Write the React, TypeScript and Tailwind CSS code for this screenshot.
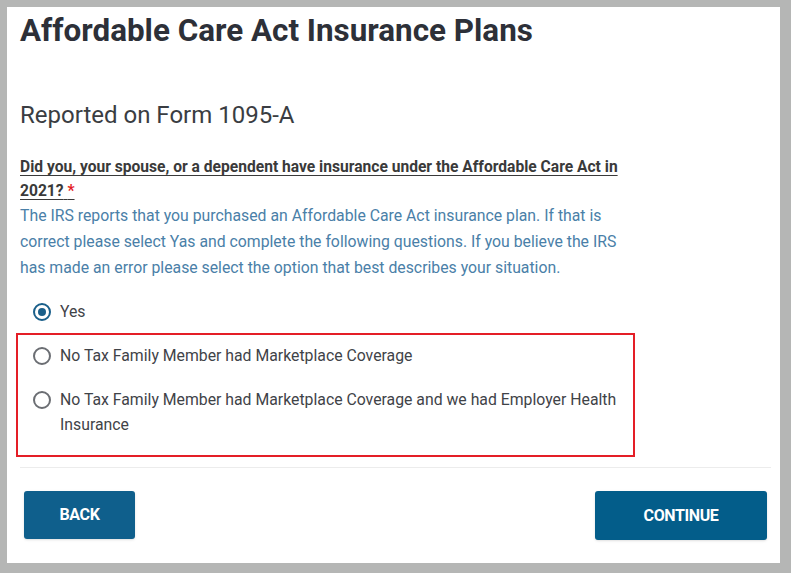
import React from 'react';

const options = [
  { id: 'yes', label: 'Yes' },
  { id: 'none', label: 'No Tax Family Member had Marketplace Coverage' },
  {
    id: 'employer',
    label: 'No Tax Family Member had Marketplace Coverage and we had Employer Health Insurance',
  },
];

const Radio = ({ checked }: { checked: boolean }) => (
  <span
    className={
      checked
        ? 'mt-[4px] flex h-[18px] w-[18px] shrink-0 items-center justify-center rounded-full border-2 border-[#1a5f8a]'
        : 'mt-[4px] flex h-[18px] w-[18px] shrink-0 items-center justify-center rounded-full border-2 border-[#6b6e73]'
    }
  >
    {checked && <span className="h-[8px] w-[8px] rounded-full bg-[#1a5f8a]" />}
  </span>
);

export default function App() {
  const selected = 'yes';

  return (
    <div className="h-[573px] w-[791px] bg-[#b5b6b5] pl-[7px] pt-[7px] font-['Roboto',sans-serif]">
      <div className="flex h-[556px] w-[773px] flex-col bg-white pl-[13px] pr-[9px]">
        <h1 className="mt-[4px] text-[31.4px] font-bold leading-[40px] text-[#2d3038]">
          Affordable Care Act Insurance Plans
        </h1>

        <h2 className="mt-[49px] text-[24px] leading-[30px] text-[#3a3d42]">Reported on Form 1095-A</h2>

        <p className="mt-[25px] w-[610px] text-[15.6px] font-bold leading-[24px] text-[#3a3a3a] underline underline-offset-[3px]">
          Did you, your spouse, or a dependent have insurance under the Affordable Care Act in 2021?{' '}
          <span className="text-[#e41e26]">*</span>
        </p>
        <p className="w-[605px] text-[15.8px] leading-[26px] text-[#4a80a8]">
          The IRS reports that you purchased an Affordable Care Act insurance plan. If that is correct please
          select Yas and complete the following questions. If you believe the IRS has made an error please select
          the option that best describes your situation.
        </p>

        <div className="mt-[18px] flex items-start gap-[9px] pl-[13px]">
          <Radio checked={selected === 'yes'} />
          <span className="text-[15.8px] leading-[26px] text-[#3f4348]">{options[0].label}</span>
        </div>

        <div className="ml-[-4px] mt-[8px] w-[619px] border-2 border-[#e41e26] pb-[18px] pt-[8px]">
          {options.slice(1).map((o) => (
            <div key={o.id} className="mt-[19px] flex items-start gap-[9px] pl-[15px] first:mt-0">
              <Radio checked={selected === o.id} />
              <span className="w-[570px] text-[15.8px] leading-[25px] text-[#3f4348]">{o.label}</span>
            </div>
          ))}
        </div>

        <div className="mt-[10px] h-px w-[751px] bg-[#ececec]" />

        <div className="mt-[23px] flex justify-between pl-[4px] pr-[4px]">
          <button className="h-[48px] w-[111px] rounded-[3px] bg-[#0f5f8c] text-[16px] font-bold tracking-tight text-white shadow-sm">
            BACK
          </button>
          <button className="h-[49px] w-[172px] rounded-[3px] bg-[#035d8a] text-[16px] font-bold tracking-tight text-white shadow-sm">
            CONTINUE
          </button>
        </div>
      </div>
    </div>
  );
}
